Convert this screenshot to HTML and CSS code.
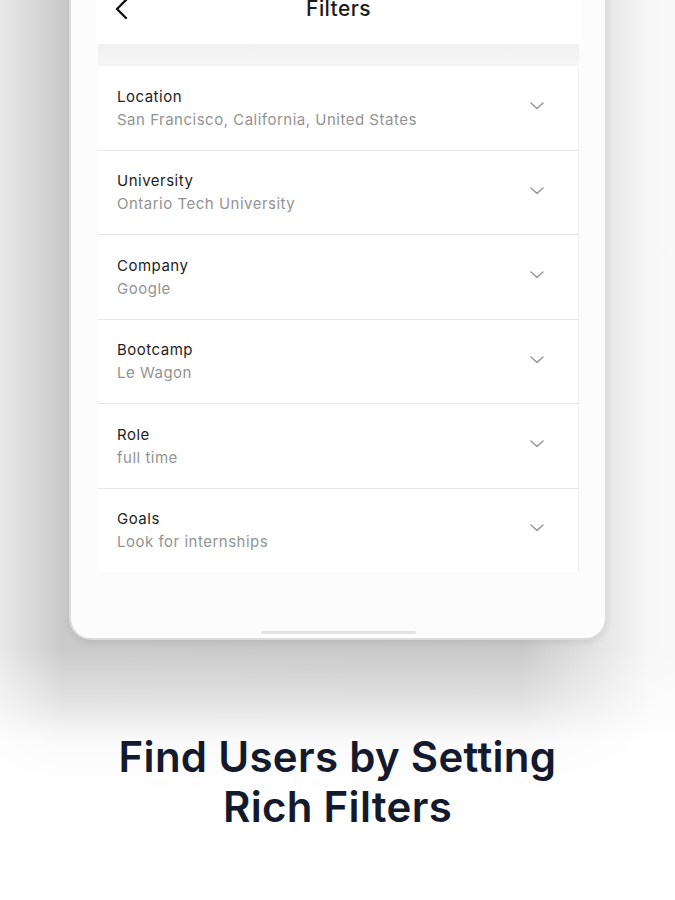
FILE: index.html
```html
<!DOCTYPE html>
<html lang="en">
<head>
<meta charset="utf-8">
<title>Filters</title>
<link rel="stylesheet" href="styles.css">
</head>
<body>
<div class="stage">
  <div class="phone">
    <div class="app-header">
      <svg class="back" width="16" height="22" viewBox="0 0 16 22" aria-hidden="true"><path d="M12 2 L3 11 L12 20" fill="none" stroke="#111" stroke-width="2.4" stroke-linecap="round" stroke-linejoin="round"/></svg>
      <div class="title">Filters</div>
    </div>
    <div class="band"></div>
    <ul class="filters">
      <li class="row"><div class="txt"><div class="label">Location</div><div class="value">San Francisco, California, United States</div></div><svg class="chev" width="14" height="8" viewBox="0 0 14 8"><path d="M1 1 L7 6.5 L13 1" fill="none" stroke="#9a9a9a" stroke-width="1.6" stroke-linecap="round" stroke-linejoin="round"/></svg></li>
      <li class="row"><div class="txt"><div class="label">University</div><div class="value">Ontario Tech University</div></div><svg class="chev" width="14" height="8" viewBox="0 0 14 8"><path d="M1 1 L7 6.5 L13 1" fill="none" stroke="#9a9a9a" stroke-width="1.6" stroke-linecap="round" stroke-linejoin="round"/></svg></li>
      <li class="row"><div class="txt"><div class="label">Company</div><div class="value">Google</div></div><svg class="chev" width="14" height="8" viewBox="0 0 14 8"><path d="M1 1 L7 6.5 L13 1" fill="none" stroke="#9a9a9a" stroke-width="1.6" stroke-linecap="round" stroke-linejoin="round"/></svg></li>
      <li class="row"><div class="txt"><div class="label">Bootcamp</div><div class="value">Le Wagon</div></div><svg class="chev" width="14" height="8" viewBox="0 0 14 8"><path d="M1 1 L7 6.5 L13 1" fill="none" stroke="#9a9a9a" stroke-width="1.6" stroke-linecap="round" stroke-linejoin="round"/></svg></li>
      <li class="row"><div class="txt"><div class="label">Role</div><div class="value">full time</div></div><svg class="chev" width="14" height="8" viewBox="0 0 14 8"><path d="M1 1 L7 6.5 L13 1" fill="none" stroke="#9a9a9a" stroke-width="1.6" stroke-linecap="round" stroke-linejoin="round"/></svg></li>
      <li class="row last"><div class="txt"><div class="label">Goals</div><div class="value">Look for internships</div></div><svg class="chev" width="14" height="8" viewBox="0 0 14 8"><path d="M1 1 L7 6.5 L13 1" fill="none" stroke="#9a9a9a" stroke-width="1.6" stroke-linecap="round" stroke-linejoin="round"/></svg></li>
    </ul>
    <div class="home-bar"></div>
  </div>
  <h1 class="headline">Find Users by Setting<br>Rich Filters</h1>
</div>
</body>
</html>
```

FILE: styles.css
```css
* { box-sizing: border-box; }
html, body { margin: 0; padding: 0; }
body {
  width: 675px;
  height: 900px;
  overflow: hidden;
  font-family: Inter, "Noto Sans", sans-serif;
  background: linear-gradient(90deg, #e9e9e9 0px, #cacaca 62px, #c8c8c8 520px, #e8e8e8 610px, #f7f7f7 650px, #f8f8f8 675px);
}
.stage {
  height: 900px;
  display: flex;
  flex-direction: column;
  align-items: center;
  background: linear-gradient(180deg, rgba(255,255,255,0) 0px, rgba(255,255,255,0) 648px, rgba(255,255,255,0.45) 700px, rgba(255,255,255,0.9) 740px, #ffffff 790px, #ffffff 900px);
}
.phone {
  width: 538px;
  height: 682px;
  margin-top: -42px;
  margin-left: 1px;
  border: 2px solid #dcdcdc;
  border-radius: 22px;
  background: #fcfcfc;
  padding: 0 26px 0 27px;
  display: flex;
  flex-direction: column;
  box-shadow: 0 3px 6px rgba(0,0,0,0.08);
  position: relative;
}
.app-header {
  height: 84px;
  background: #ffffff;
  display: flex;
  align-items: flex-start;
  padding-top: 35px;
  padding-left: 18px;
  margin: 0 -2px;
}
.back { display: block; margin-top: 3px; }
.title {
  flex: 1;
  text-align: center;
  font-size: 21px;
  line-height: 28px;
  color: #1b1b1b;
  font-weight: 500;
  letter-spacing: 0.4px;
  margin-right: 34px;
}
.band {
  height: 22px;
  background: linear-gradient(180deg, #f1f1f1, #f6f6f6);
}
.filters {
  list-style: none;
  margin: 0;
  padding: 0;
}
.row {
  height: 84.5px;
  background: #ffffff;
  border-bottom: 1px solid #e6e6e6;
  border-right: 1px solid #f0f0f0;
  display: flex;
  align-items: center;
  padding: 0 34px 0 19px;
}
.row.last { border-bottom: none; height: 82px; }
.txt { flex: 1; padding-top: 2px; }
.label {
  font-size: 15px;
  line-height: 20px;
  color: #1e1e1e;
  letter-spacing: 0.5px;
}
.value {
  font-size: 15px;
  line-height: 22px;
  color: #939393;
  letter-spacing: 0.5px;
  margin-top: 2px;
}
.chev { display: block; margin-bottom: 3px; }
.home-bar {
  position: absolute;
  left: 190px;
  bottom: 4px;
  width: 155px;
  height: 3px;
  border-radius: 2px;
  background: #e4e4e4;
}
.headline {
  margin: 92px 0 0;
  font-family: Inter, "Noto Sans", sans-serif;
  font-weight: 600;
  font-size: 42px;
  line-height: 50px;
  color: #141a2d;
  text-align: center;
  letter-spacing: 0.3px;
}
```
